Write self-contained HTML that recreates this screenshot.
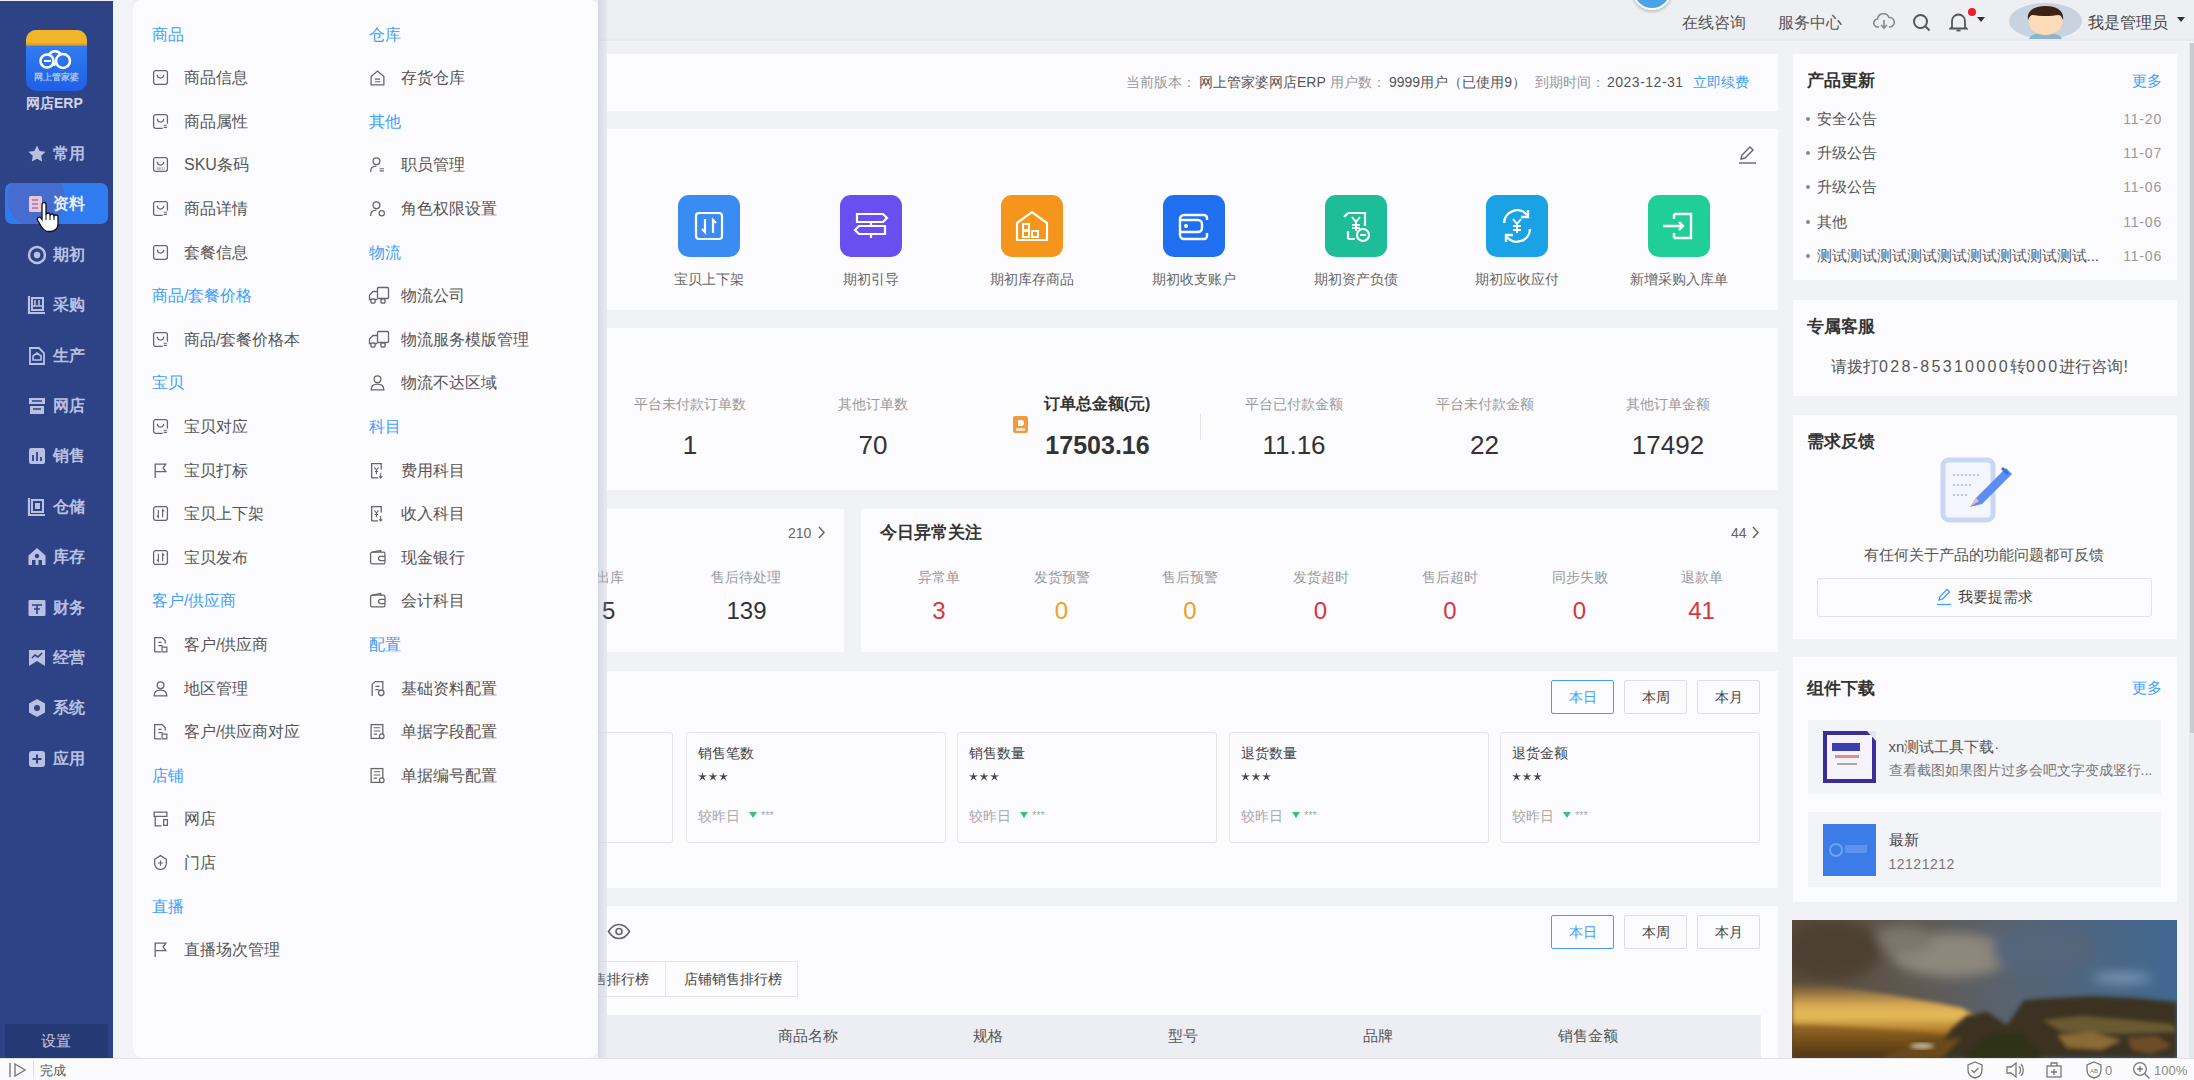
<!DOCTYPE html>
<html><head><meta charset="utf-8">
<style>
*{box-sizing:border-box;margin:0;padding:0}
html,body{width:2194px;height:1080px;overflow:hidden;background:#f1f2f6;font-family:"Liberation Sans",sans-serif;color:#333}
.a{position:absolute}
.t{position:absolute;white-space:nowrap;line-height:20px}
.c{transform:translateX(-50%)}
#hdr{left:0;top:0;width:2194px;height:41px;background:#eeeff3}
#side{left:0;top:1px;width:113px;height:1057px;background:#2e4386}
.card{position:absolute;background:#fcfcfe}
#status{left:0;top:1058px;width:2194px;height:22px;background:#fbfbfd;border-top:1px solid #e2e3e8}
#fly{left:133px;top:0;width:465px;height:1058px;background:#fcfcfe;border-radius:8px 8px 10px 10px}
#flyshadow{left:113px;top:0;width:20px;height:1058px;background:#f3f4f7}
#flyedge{left:598px;top:0;width:9px;height:1058px;background:linear-gradient(90deg,rgba(170,172,190,.35),rgba(190,192,210,.15))}
</style></head><body>
<div id="hdr" class="a"></div><div class="a" style="left:0;top:37px;width:2194px;height:4px;background:linear-gradient(#eeeff3,#e6e7ed)"></div>

<!-- main cards -->
<div class="card" style="left:607px;top:54px;width:1171px;height:57px"></div>
<div class="card" style="left:607px;top:129px;width:1171px;height:181px"></div>
<div class="card" style="left:607px;top:328px;width:1171px;height:162px"></div>
<div class="card" style="left:607px;top:509px;width:237px;height:143px"></div>
<div class="card" style="left:861px;top:509px;width:917px;height:143px"></div>
<div class="card" style="left:607px;top:671px;width:1171px;height:217px"></div>
<div class="card" style="left:607px;top:906px;width:1171px;height:152px"></div>

<div class="t" style="left:1681.5px;top:11.5px;line-height:21px;font-size:16px;color:#555">在线咨询</div>
<div class="t" style="left:1778px;top:11.5px;line-height:21px;font-size:16px;color:#555">服务中心</div>
<div class="a" style="left:1632px;top:-30px;width:40px;height:40px;border-radius:50%;background:#4aa3e6;border:2px solid #fff;box-shadow:0 2px 3px rgba(0,0,0,.2)"></div>
<svg class="a" style="left:1873px;top:12px" width="22" height="19" viewBox="0 0 22 19"><path d="M6 15H5a4 4 0 0 1-.5-8A6 6 0 0 1 16 5.5a4.5 4.5 0 0 1 1 9.5h-1" fill="none" stroke="#888" stroke-width="1.6"/><path d="M11 8v8M8 13l3 3 3-3" fill="none" stroke="#888" stroke-width="1.6"/></svg>
<svg class="a" style="left:1912px;top:13px" width="19" height="19" viewBox="0 0 19 19"><circle cx="8.5" cy="8.5" r="6.5" fill="none" stroke="#555" stroke-width="2"/><path d="M13.5 13.5l4 4" stroke="#555" stroke-width="2"/></svg>
<svg class="a" style="left:1949px;top:12px" width="19" height="20" viewBox="0 0 19 20"><path d="M3 15V9a6.5 6.5 0 0 1 13 0v6l1.5 1.5h-16z" fill="none" stroke="#555" stroke-width="1.8"/><path d="M7.5 18.5h4" stroke="#555" stroke-width="1.8"/></svg>
<div class="a" style="left:1968px;top:8px;width:8px;height:8px;border-radius:50%;background:#e8202a"></div>
<svg class="a" style="left:1977px;top:17px" width="8" height="6"><path d="M0 0h8L4 5z" fill="#333"/></svg>
<svg class="a" style="left:2009px;top:3px" width="73" height="36" viewBox="0 0 73 36"><ellipse cx="36.5" cy="18" rx="36.5" ry="18" fill="#c9d3df"/><path d="M20 36c2-5 8-6 16.5-6s14.5 1 16.5 6z" fill="#8db4cc"/><ellipse cx="36.5" cy="18" rx="17" ry="14" fill="#fcdcb8"/><path d="M19 17c-1.5-9 6-14 17.5-14S55.5 8 54 17c-1-3-2.5-4.5-4-5-4 .5-9 1-13.5 1s-9.5-.5-13.5-1c-1.5.5-3 2-4 5z" fill="#3b2216"/></svg>
<div class="t" style="left:2088px;top:11.5px;line-height:21px;font-size:16px;color:#444">我是管理员</div>
<svg class="a" style="left:2177px;top:17px" width="8" height="6"><path d="M0 0h8L4 5z" fill="#333"/></svg>
<div class="t" style="left:1126px;top:73.0px;line-height:18px;font-size:14px;color:#999">当前版本：</div>
<div class="t" style="left:1199px;top:73.0px;line-height:18px;font-size:14px;color:#555">网上管家婆网店ERP</div>
<div class="t" style="left:1330px;top:73.0px;line-height:18px;font-size:14px;color:#999">用户数：</div>
<div class="t" style="left:1389px;top:73.0px;line-height:18px;font-size:14px;color:#555">9999用户（已使用9）</div>
<div class="t" style="left:1535px;top:73.0px;line-height:18px;font-size:14px;color:#999">到期时间：</div>
<div class="t" style="left:1607px;top:73.0px;line-height:18px;font-size:14px;color:#555;letter-spacing:0.5px">2023-12-31</div>
<div class="t" style="left:1693px;top:73.0px;line-height:18px;font-size:14px;color:#409eff">立即续费</div>
<svg class="a" style="left:1737px;top:146px" width="20" height="18" viewBox="0 0 20 18"><path d="M4 13l1-4 8-8 3 3-8 8z" fill="none" stroke="#666" stroke-width="1.4"/><path d="M2 17h17" stroke="#666" stroke-width="1.4"/></svg>
<svg class="a" style="left:678.0px;top:195px" width="62" height="62" viewBox="0 0 62 62"><rect width="62" height="62" rx="11" fill="#3a8cf3"/><rect x="18" y="18" width="26" height="26" rx="3" fill="none" stroke="#fff" stroke-width="2.2"/><path d="M27 24v13l-3-3M35 38V25l3 3" fill="none" stroke="#fff" stroke-width="2.2"/></svg>
<div class="t" style="left:709.0px;transform:translateX(-50%);top:270.0px;line-height:18px;font-size:14px;color:#666">宝贝上下架</div>
<svg class="a" style="left:839.6px;top:195px" width="62" height="62" viewBox="0 0 62 62"><rect width="62" height="62" rx="11" fill="#6a4ff0"/><path d="M17 19h26l4 4-4 4H17zM45 31H19l-4 4 4 4h26zM31 27v4M31 39v4" fill="none" stroke="#fff" stroke-width="2.2"/></svg>
<div class="t" style="left:870.6px;transform:translateX(-50%);top:270.0px;line-height:18px;font-size:14px;color:#666">期初引导</div>
<svg class="a" style="left:1001.3px;top:195px" width="62" height="62" viewBox="0 0 62 62"><rect width="62" height="62" rx="11" fill="#f5951c"/><path d="M16 28L31 17l15 11v17H16z" fill="none" stroke="#fff" stroke-width="2.2"/><rect x="22" y="29" width="6" height="6" fill="none" stroke="#fff" stroke-width="2"/><rect x="22" y="36" width="6" height="6" fill="none" stroke="#fff" stroke-width="2"/><rect x="31" y="36" width="6" height="6" fill="none" stroke="#fff" stroke-width="2"/></svg>
<div class="t" style="left:1032.3px;transform:translateX(-50%);top:270.0px;line-height:18px;font-size:14px;color:#666">期初库存商品</div>
<svg class="a" style="left:1163.0px;top:195px" width="62" height="62" viewBox="0 0 62 62"><rect width="62" height="62" rx="11" fill="#1f6ff0"/><path d="M44 25v-2a3 3 0 0 0-3-3H21a4 4 0 0 0-4 4v16a4 4 0 0 0 4 4h20a3 3 0 0 0 3-3v-3" fill="none" stroke="#fff" stroke-width="2.4"/><path d="M17 25h18a4 4 0 0 1 4 4v4a4 4 0 0 1-4 4H17" fill="none" stroke="#fff" stroke-width="2.4"/><circle cx="23" cy="31" r="2" fill="#fff"/></svg>
<div class="t" style="left:1194.0px;transform:translateX(-50%);top:270.0px;line-height:18px;font-size:14px;color:#666">期初收支账户</div>
<svg class="a" style="left:1324.6px;top:195px" width="62" height="62" viewBox="0 0 62 62"><rect width="62" height="62" rx="11" fill="#1dbd9a"/><path d="M23 18h17v13M23 18l-4 4M23 44v-8M23 44h7" fill="none" stroke="#fff" stroke-width="2.2"/><path d="M27 22l4 5 4-5M31 27v9M27 30h8M27 33h8" fill="none" stroke="#fff" stroke-width="2"/><circle cx="38" cy="40" r="6" fill="none" stroke="#fff" stroke-width="2.2"/><path d="M35 40h6" stroke="#fff" stroke-width="2"/></svg>
<div class="t" style="left:1355.6px;transform:translateX(-50%);top:270.0px;line-height:18px;font-size:14px;color:#666">期初资产负债</div>
<svg class="a" style="left:1486.2px;top:195px" width="62" height="62" viewBox="0 0 62 62"><rect width="62" height="62" rx="11" fill="#1aa2e6"/><path d="M18 28a13 13 0 0 1 23-8M44 34a13 13 0 0 1-23 8" fill="none" stroke="#fff" stroke-width="2.4"/><path d="M42 15v7h-7M20 47v-7h7" fill="none" stroke="#fff" stroke-width="2.4"/><path d="M27 24l4 5 4-5M31 29v9M27 31h8M27 35h8" fill="none" stroke="#fff" stroke-width="2"/></svg>
<div class="t" style="left:1517.2px;transform:translateX(-50%);top:270.0px;line-height:18px;font-size:14px;color:#666">期初应收应付</div>
<svg class="a" style="left:1647.9px;top:195px" width="62" height="62" viewBox="0 0 62 62"><rect width="62" height="62" rx="11" fill="#20cf97"/><path d="M26 19h17v24H26M26 19v5M26 43v-5" fill="none" stroke="#fff" stroke-width="2.4"/><path d="M15 31h20M31 27l4 4-4 4" fill="none" stroke="#fff" stroke-width="2.4"/></svg>
<div class="t" style="left:1678.9px;transform:translateX(-50%);top:270.0px;line-height:18px;font-size:14px;color:#666">新增采购入库单</div>
<div class="t" style="left:690px;transform:translateX(-50%);top:395.0px;line-height:18px;font-size:14px;color:#999">平台未付款订单数</div>
<div class="t" style="left:690px;transform:translateX(-50%);top:427.5px;line-height:34px;font-size:26px;color:#333">1</div>
<div class="t" style="left:873px;transform:translateX(-50%);top:395.0px;line-height:18px;font-size:14px;color:#999">其他订单数</div>
<div class="t" style="left:873px;transform:translateX(-50%);top:427.5px;line-height:34px;font-size:26px;color:#333">70</div>
<div class="t" style="left:1294px;transform:translateX(-50%);top:395.0px;line-height:18px;font-size:14px;color:#999">平台已付款金额</div>
<div class="t" style="left:1294px;transform:translateX(-50%);top:427.5px;line-height:34px;font-size:26px;color:#333">11.16</div>
<div class="t" style="left:1484.5px;transform:translateX(-50%);top:395.0px;line-height:18px;font-size:14px;color:#999">平台未付款金额</div>
<div class="t" style="left:1484.5px;transform:translateX(-50%);top:427.5px;line-height:34px;font-size:26px;color:#333">22</div>
<div class="t" style="left:1668px;transform:translateX(-50%);top:395.0px;line-height:18px;font-size:14px;color:#999">其他订单金额</div>
<div class="t" style="left:1668px;transform:translateX(-50%);top:427.5px;line-height:34px;font-size:26px;color:#333">17492</div>
<div class="t" style="left:1097px;transform:translateX(-50%);top:394.0px;line-height:20px;font-size:16px;color:#333;font-weight:bold">订单总金额(元)</div>
<div class="t" style="left:1097.5px;transform:translateX(-50%);top:429.0px;line-height:32px;font-size:25px;color:#333;font-weight:bold">17503.16</div>
<svg class="a" style="left:1013px;top:416px" width="15" height="17" viewBox="0 0 15 17"><rect x="0" y="0" width="15" height="17" rx="2" fill="#f59a3a"/><path d="M5 4h3a3 3 0 0 1 0 6H5z" fill="#fff"/><rect x="3" y="12" width="9" height="3" fill="#fde0c0"/></svg>
<div class="a" style="left:1200px;top:414px;width:1px;height:26px;background:#e6e6ea"></div>
<div class="t" style="left:788px;top:523.5px;line-height:18px;font-size:14px;color:#666">210</div>
<svg class="a" style="left:817px;top:526px" width="9" height="13" viewBox="0 0 9 13"><path d="M2 1l5 5.5L2 12" fill="none" stroke="#666" stroke-width="1.5"/></svg>
<div class="t" style="left:596px;top:567.5px;line-height:18px;font-size:14px;color:#999">出库</div>
<div class="t" style="left:746px;transform:translateX(-50%);top:567.5px;line-height:18px;font-size:14px;color:#999">售后待处理</div>
<div class="t" style="left:602px;top:595.0px;line-height:31px;font-size:24px;color:#333">5</div>
<div class="t" style="left:746.5px;transform:translateX(-50%);top:595.0px;line-height:31px;font-size:24px;color:#333">139</div>
<div class="t" style="left:880px;top:522.0px;line-height:22px;font-size:17px;color:#333;font-weight:bold">今日异常关注</div>
<div class="t" style="left:1731px;top:523.5px;line-height:18px;font-size:14px;color:#666">44</div>
<svg class="a" style="left:1751px;top:526px" width="9" height="13" viewBox="0 0 9 13"><path d="M2 1l5 5.5L2 12" fill="none" stroke="#666" stroke-width="1.5"/></svg>
<div class="t" style="left:939px;transform:translateX(-50%);top:567.5px;line-height:18px;font-size:14px;color:#999">异常单</div>
<div class="t" style="left:939px;transform:translateX(-50%);top:595.0px;line-height:31px;font-size:24px;color:#d8363d">3</div>
<div class="t" style="left:1061.5px;transform:translateX(-50%);top:567.5px;line-height:18px;font-size:14px;color:#999">发货预警</div>
<div class="t" style="left:1061.5px;transform:translateX(-50%);top:595.0px;line-height:31px;font-size:24px;color:#f0a020">0</div>
<div class="t" style="left:1190px;transform:translateX(-50%);top:567.5px;line-height:18px;font-size:14px;color:#999">售后预警</div>
<div class="t" style="left:1190px;transform:translateX(-50%);top:595.0px;line-height:31px;font-size:24px;color:#f0a020">0</div>
<div class="t" style="left:1320.5px;transform:translateX(-50%);top:567.5px;line-height:18px;font-size:14px;color:#999">发货超时</div>
<div class="t" style="left:1320.5px;transform:translateX(-50%);top:595.0px;line-height:31px;font-size:24px;color:#d8363d">0</div>
<div class="t" style="left:1450px;transform:translateX(-50%);top:567.5px;line-height:18px;font-size:14px;color:#999">售后超时</div>
<div class="t" style="left:1450px;transform:translateX(-50%);top:595.0px;line-height:31px;font-size:24px;color:#d8363d">0</div>
<div class="t" style="left:1579.5px;transform:translateX(-50%);top:567.5px;line-height:18px;font-size:14px;color:#999">同步失败</div>
<div class="t" style="left:1579.5px;transform:translateX(-50%);top:595.0px;line-height:31px;font-size:24px;color:#d8363d">0</div>
<div class="t" style="left:1701.5px;transform:translateX(-50%);top:567.5px;line-height:18px;font-size:14px;color:#999">退款单</div>
<div class="t" style="left:1701.5px;transform:translateX(-50%);top:595.0px;line-height:31px;font-size:24px;color:#d8363d">41</div>
<div class="a" style="left:1551px;top:680px;width:63px;height:34px;border:1px solid #409eff;border-radius:2px"></div><div class="t" style="left:1582.5px;transform:translateX(-50%);top:688.0px;line-height:18px;font-size:14px;color:#409eff">本日</div>
<div class="a" style="left:1624px;top:680px;width:63px;height:34px;border:1px solid #dcdfe6;border-radius:2px"></div><div class="t" style="left:1655.5px;transform:translateX(-50%);top:688.0px;line-height:18px;font-size:14px;color:#444">本周</div>
<div class="a" style="left:1697px;top:680px;width:63px;height:34px;border:1px solid #dcdfe6;border-radius:2px"></div><div class="t" style="left:1728.5px;transform:translateX(-50%);top:688.0px;line-height:18px;font-size:14px;color:#444">本月</div>
<div class="a" style="left:414px;top:732px;width:259px;height:111px;border:1px solid #e4e6ec;border-radius:3px"></div>
<div class="t" style="left:426px;top:743.5px;line-height:18px;font-size:14px;color:#444">销售金额</div>
<svg class="a" style="left:426px;top:772px" width="31" height="9" viewBox="0 0 31 9"><path d="M4.5 0l.8 3.6L9 3.3 5.8 5.3l1.9 3.5-3.2-2.4-3.2 2.4 1.9-3.5L0 3.3l3.7.3z" fill="#444"/><path d="M4.5 0l.8 3.6L9 3.3 5.8 5.3l1.9 3.5-3.2-2.4-3.2 2.4 1.9-3.5L0 3.3l3.7.3z" transform="translate(10.5 0)" fill="#444"/><path d="M4.5 0l.8 3.6L9 3.3 5.8 5.3l1.9 3.5-3.2-2.4-3.2 2.4 1.9-3.5L0 3.3l3.7.3z" transform="translate(21 0)" fill="#444"/></svg>
<div class="t" style="left:426px;top:806.5px;line-height:18px;font-size:14px;color:#aaa">较昨日</div>
<svg class="a" style="left:477px;top:812px" width="8" height="7"><path d="M0 0h8L4 6z" fill="#3bbf7a"/></svg><div class="t" style="left:489px;top:808.0px;line-height:14px;font-size:11px;color:#aaa">***</div>
<div class="a" style="left:686px;top:732px;width:260px;height:111px;border:1px solid #e4e6ec;border-radius:3px"></div>
<div class="t" style="left:698px;top:743.5px;line-height:18px;font-size:14px;color:#444">销售笔数</div>
<svg class="a" style="left:698px;top:772px" width="31" height="9" viewBox="0 0 31 9"><path d="M4.5 0l.8 3.6L9 3.3 5.8 5.3l1.9 3.5-3.2-2.4-3.2 2.4 1.9-3.5L0 3.3l3.7.3z" fill="#444"/><path d="M4.5 0l.8 3.6L9 3.3 5.8 5.3l1.9 3.5-3.2-2.4-3.2 2.4 1.9-3.5L0 3.3l3.7.3z" transform="translate(10.5 0)" fill="#444"/><path d="M4.5 0l.8 3.6L9 3.3 5.8 5.3l1.9 3.5-3.2-2.4-3.2 2.4 1.9-3.5L0 3.3l3.7.3z" transform="translate(21 0)" fill="#444"/></svg>
<div class="t" style="left:698px;top:806.5px;line-height:18px;font-size:14px;color:#aaa">较昨日</div>
<svg class="a" style="left:749px;top:812px" width="8" height="7"><path d="M0 0h8L4 6z" fill="#3bbf7a"/></svg><div class="t" style="left:761px;top:808.0px;line-height:14px;font-size:11px;color:#aaa">***</div>
<div class="a" style="left:957px;top:732px;width:260px;height:111px;border:1px solid #e4e6ec;border-radius:3px"></div>
<div class="t" style="left:969px;top:743.5px;line-height:18px;font-size:14px;color:#444">销售数量</div>
<svg class="a" style="left:969px;top:772px" width="31" height="9" viewBox="0 0 31 9"><path d="M4.5 0l.8 3.6L9 3.3 5.8 5.3l1.9 3.5-3.2-2.4-3.2 2.4 1.9-3.5L0 3.3l3.7.3z" fill="#444"/><path d="M4.5 0l.8 3.6L9 3.3 5.8 5.3l1.9 3.5-3.2-2.4-3.2 2.4 1.9-3.5L0 3.3l3.7.3z" transform="translate(10.5 0)" fill="#444"/><path d="M4.5 0l.8 3.6L9 3.3 5.8 5.3l1.9 3.5-3.2-2.4-3.2 2.4 1.9-3.5L0 3.3l3.7.3z" transform="translate(21 0)" fill="#444"/></svg>
<div class="t" style="left:969px;top:806.5px;line-height:18px;font-size:14px;color:#aaa">较昨日</div>
<svg class="a" style="left:1020px;top:812px" width="8" height="7"><path d="M0 0h8L4 6z" fill="#3bbf7a"/></svg><div class="t" style="left:1032px;top:808.0px;line-height:14px;font-size:11px;color:#aaa">***</div>
<div class="a" style="left:1229px;top:732px;width:260px;height:111px;border:1px solid #e4e6ec;border-radius:3px"></div>
<div class="t" style="left:1241px;top:743.5px;line-height:18px;font-size:14px;color:#444">退货数量</div>
<svg class="a" style="left:1241px;top:772px" width="31" height="9" viewBox="0 0 31 9"><path d="M4.5 0l.8 3.6L9 3.3 5.8 5.3l1.9 3.5-3.2-2.4-3.2 2.4 1.9-3.5L0 3.3l3.7.3z" fill="#444"/><path d="M4.5 0l.8 3.6L9 3.3 5.8 5.3l1.9 3.5-3.2-2.4-3.2 2.4 1.9-3.5L0 3.3l3.7.3z" transform="translate(10.5 0)" fill="#444"/><path d="M4.5 0l.8 3.6L9 3.3 5.8 5.3l1.9 3.5-3.2-2.4-3.2 2.4 1.9-3.5L0 3.3l3.7.3z" transform="translate(21 0)" fill="#444"/></svg>
<div class="t" style="left:1241px;top:806.5px;line-height:18px;font-size:14px;color:#aaa">较昨日</div>
<svg class="a" style="left:1292px;top:812px" width="8" height="7"><path d="M0 0h8L4 6z" fill="#3bbf7a"/></svg><div class="t" style="left:1304px;top:808.0px;line-height:14px;font-size:11px;color:#aaa">***</div>
<div class="a" style="left:1500px;top:732px;width:260px;height:111px;border:1px solid #e4e6ec;border-radius:3px"></div>
<div class="t" style="left:1512px;top:743.5px;line-height:18px;font-size:14px;color:#444">退货金额</div>
<svg class="a" style="left:1512px;top:772px" width="31" height="9" viewBox="0 0 31 9"><path d="M4.5 0l.8 3.6L9 3.3 5.8 5.3l1.9 3.5-3.2-2.4-3.2 2.4 1.9-3.5L0 3.3l3.7.3z" fill="#444"/><path d="M4.5 0l.8 3.6L9 3.3 5.8 5.3l1.9 3.5-3.2-2.4-3.2 2.4 1.9-3.5L0 3.3l3.7.3z" transform="translate(10.5 0)" fill="#444"/><path d="M4.5 0l.8 3.6L9 3.3 5.8 5.3l1.9 3.5-3.2-2.4-3.2 2.4 1.9-3.5L0 3.3l3.7.3z" transform="translate(21 0)" fill="#444"/></svg>
<div class="t" style="left:1512px;top:806.5px;line-height:18px;font-size:14px;color:#aaa">较昨日</div>
<svg class="a" style="left:1563px;top:812px" width="8" height="7"><path d="M0 0h8L4 6z" fill="#3bbf7a"/></svg><div class="t" style="left:1575px;top:808.0px;line-height:14px;font-size:11px;color:#aaa">***</div>
<div class="a" style="left:1551px;top:915px;width:63px;height:34px;border:1px solid #409eff;border-radius:2px"></div><div class="t" style="left:1582.5px;transform:translateX(-50%);top:923.0px;line-height:18px;font-size:14px;color:#409eff">本日</div>
<div class="a" style="left:1624px;top:915px;width:63px;height:34px;border:1px solid #dcdfe6;border-radius:2px"></div><div class="t" style="left:1655.5px;transform:translateX(-50%);top:923.0px;line-height:18px;font-size:14px;color:#444">本周</div>
<div class="a" style="left:1697px;top:915px;width:63px;height:34px;border:1px solid #dcdfe6;border-radius:2px"></div><div class="t" style="left:1728.5px;transform:translateX(-50%);top:923.0px;line-height:18px;font-size:14px;color:#444">本月</div>
<svg class="a" style="left:607px;top:923px" width="24" height="17" viewBox="0 0 24 17"><path d="M1.5 8.5C4.5 3.5 8 1.5 12 1.5s7.5 2 10.5 7c-3 5-6.5 7-10.5 7s-7.5-2-10.5-7z" fill="none" stroke="#666" stroke-width="1.6"/><circle cx="12" cy="8.5" r="3" fill="none" stroke="#666" stroke-width="1.6"/></svg>
<div class="a" style="left:540px;top:961px;width:126px;height:36px;border:1px solid #e4e6ec"></div><div class="a" style="left:666px;top:961px;width:132px;height:36px;border:1px solid #e4e6ec;border-left:none"></div>
<div class="t" style="right:1545px;top:969.5px;line-height:18px;font-size:14px;color:#444">售排行榜</div>
<div class="t" style="left:683.5px;top:969.5px;line-height:18px;font-size:14px;color:#444">店铺销售排行榜</div>
<div class="a" style="left:607px;top:1015px;width:1154px;height:43px;background:#eceef3"></div>
<div class="t" style="left:808px;transform:translateX(-50%);top:1027.0px;line-height:18px;font-size:15px;color:#555">商品名称</div>
<div class="t" style="left:988px;transform:translateX(-50%);top:1027.0px;line-height:18px;font-size:15px;color:#555">规格</div>
<div class="t" style="left:1183px;transform:translateX(-50%);top:1027.0px;line-height:18px;font-size:15px;color:#555">型号</div>
<div class="t" style="left:1378px;transform:translateX(-50%);top:1027.0px;line-height:18px;font-size:15px;color:#555">品牌</div>
<div class="t" style="left:1588px;transform:translateX(-50%);top:1027.0px;line-height:18px;font-size:15px;color:#555">销售金额</div>

<!-- right column -->
<div class="card" style="left:1793px;top:54px;width:384px;height:226px"></div>
<div class="card" style="left:1793px;top:300px;width:384px;height:96px"></div>
<div class="card" style="left:1793px;top:415px;width:384px;height:224px"></div>
<div class="card" style="left:1793px;top:657px;width:384px;height:245px"></div>

<div class="t" style="left:1807px;top:70.0px;line-height:22px;font-size:17px;color:#333;font-weight:bold">产品更新</div>
<div class="t" style="right:32.5px;top:70.5px;line-height:20px;font-size:15px;color:#409eff">更多</div>
<div class="a" style="left:1806px;top:116.6px;width:4px;height:4px;border-radius:50%;background:#888"></div><div class="t" style="left:1816.5px;top:108.6px;line-height:20px;font-size:15px;color:#555">安全公告</div>
<div class="t" style="right:32px;top:109.6px;line-height:18px;font-size:14px;color:#999;letter-spacing:0.8px">11-20</div>
<div class="a" style="left:1806px;top:151.0px;width:4px;height:4px;border-radius:50%;background:#888"></div><div class="t" style="left:1816.5px;top:143.0px;line-height:20px;font-size:15px;color:#555">升级公告</div>
<div class="t" style="right:32px;top:144.0px;line-height:18px;font-size:14px;color:#999;letter-spacing:0.8px">11-07</div>
<div class="a" style="left:1806px;top:185.4px;width:4px;height:4px;border-radius:50%;background:#888"></div><div class="t" style="left:1816.5px;top:177.4px;line-height:20px;font-size:15px;color:#555">升级公告</div>
<div class="t" style="right:32px;top:178.4px;line-height:18px;font-size:14px;color:#999;letter-spacing:0.8px">11-06</div>
<div class="a" style="left:1806px;top:219.8px;width:4px;height:4px;border-radius:50%;background:#888"></div><div class="t" style="left:1816.5px;top:211.8px;line-height:20px;font-size:15px;color:#555">其他</div>
<div class="t" style="right:32px;top:212.8px;line-height:18px;font-size:14px;color:#999;letter-spacing:0.8px">11-06</div>
<div class="a" style="left:1806px;top:254.2px;width:4px;height:4px;border-radius:50%;background:#888"></div><div class="t" style="left:1816.5px;top:246.2px;line-height:20px;font-size:15px;color:#555">测试测试测试测试测试测试测试测试测试...</div>
<div class="t" style="right:32px;top:247.2px;line-height:18px;font-size:14px;color:#999;letter-spacing:0.8px">11-06</div>
<div class="t" style="left:1807px;top:315.5px;line-height:22px;font-size:17px;color:#333;font-weight:bold">专属客服</div>
<div class="t" style="left:1979.5px;transform:translateX(-50%);top:355.5px;line-height:21px;font-size:16px;color:#555">请拨打<span style="letter-spacing:2.3px">028-85310000</span>转<span style="letter-spacing:2.3px">000</span>进行咨询<span style="letter-spacing:0">!</span></div>
<div class="t" style="left:1807px;top:430.5px;line-height:22px;font-size:17px;color:#333;font-weight:bold">需求反馈</div>
<svg class="a" style="left:1940px;top:457px" width="73" height="66" viewBox="0 0 73 66">
<rect x="3" y="3" width="50" height="60" rx="6" fill="#f4f6fd" stroke="#c9d6f6" stroke-width="5"/>
<path d="M13 18h26M13 28h18M13 38h16" stroke="#b8c4e8" stroke-width="2" stroke-dasharray="2 2"/>
<path d="M30 50l6-9 30-30 6 6-30 30z" fill="#5b8ef0"/><path d="M30 50l6-9 3 3z" fill="#f0b8a8"/><path d="M62 11l6 6" stroke="#3a6de0" stroke-width="3"/>
</svg>
<div class="t" style="left:1984px;transform:translateX(-50%);top:543.5px;line-height:21px;font-size:15px;color:#555">有任何关于产品的功能问题都可反馈</div>
<div class="a" style="left:1817px;top:578px;width:335px;height:39px;border:1px solid #e2e4ea;border-radius:3px"></div>
<svg class="a" style="left:1936px;top:588px" width="16" height="18" viewBox="0 0 16 18"><path d="M3 12l1-3.5 7-7 2.5 2.5-7 7z" fill="none" stroke="#409eff" stroke-width="1.3"/><path d="M1 16.5h14" stroke="#409eff" stroke-width="1.3"/></svg>
<div class="t" style="left:1957.5px;top:587.0px;line-height:20px;font-size:15px;color:#444">我要提需求</div>
<div class="t" style="left:1807px;top:678.0px;line-height:22px;font-size:17px;color:#333;font-weight:bold">组件下载</div>
<div class="t" style="right:32.5px;top:678.0px;line-height:20px;font-size:15px;color:#409eff">更多</div>
<div class="a" style="left:1808px;top:720px;width:353px;height:74px;background:#f3f4f7"></div>
<div class="a" style="left:1808px;top:812px;width:353px;height:75px;background:#f3f4f7"></div>
<svg class="a" style="left:1823px;top:731px" width="53" height="52" viewBox="0 0 53 52"><rect width="53" height="52" fill="#3a2e9a"/><rect x="4" y="4" width="45" height="44" fill="#f6f4fa"/><rect x="9" y="12" width="28" height="8" fill="#3a40b0"/><rect x="12" y="24" width="24" height="3" fill="#e88a8a"/><rect x="14" y="32" width="20" height="2" fill="#aaa"/><path d="M44 0h9v10z" fill="#e8e4f6"/></svg>
<div class="a" style="left:1823px;top:824px;width:53px;height:52px;background:#3b7ce6"></div>
<svg class="a" style="left:1827px;top:838px" width="44" height="22" viewBox="0 0 44 22"><circle cx="9" cy="12" r="6" fill="none" stroke="#6fa2f0" stroke-width="2"/><rect x="18" y="7" width="22" height="8" fill="#5d93ee"/></svg>
<div class="t" style="left:1888.5px;top:737.0px;line-height:20px;font-size:15px;color:#555">xn测试工具下载·</div>
<div class="t" style="left:1888.5px;top:761.0px;line-height:18px;font-size:14px;color:#777">查看截图如果图片过多会吧文字变成竖行...</div>
<div class="t" style="left:1888.5px;top:830.0px;line-height:20px;font-size:15px;color:#444">最新</div>
<div class="t" style="left:1888.5px;top:854.5px;line-height:18px;font-size:14px;color:#777;letter-spacing:0.5px">12121212</div>
<svg class="a" style="left:1792px;top:920px" width="385" height="138" viewBox="0 0 385 138" preserveAspectRatio="none">
<defs>
<linearGradient id="sky" x1="0" y1="0" x2="1" y2="0"><stop offset="0" stop-color="#5a4a38"/><stop offset=".35" stop-color="#5f5a54"/><stop offset=".6" stop-color="#566474"/><stop offset="1" stop-color="#406892"/></linearGradient>
<linearGradient id="glow" x1="0" y1="0" x2="0" y2="1"><stop offset="0" stop-color="#c89a48" stop-opacity="0"/><stop offset=".3" stop-color="#d8a850"/><stop offset=".45" stop-color="#e6bc5c"/><stop offset=".65" stop-color="#b07a28"/><stop offset="1" stop-color="#5a3c16"/></linearGradient>
<linearGradient id="sea" x1="0" y1="0" x2="0" y2="1"><stop offset="0" stop-color="#9a6a24"/><stop offset="1" stop-color="#4e3414"/></linearGradient>
<filter id="bl" x="-20%" y="-20%" width="140%" height="140%"><feGaussianBlur stdDeviation="6"/></filter>
<filter id="bl2"><feGaussianBlur stdDeviation="2"/></filter>
</defs>
<rect width="385" height="138" fill="url(#sky)"/>
<g filter="url(#bl)">
<ellipse cx="160" cy="35" rx="60" ry="22" fill="#8d877c"/>
<ellipse cx="110" cy="20" rx="30" ry="14" fill="#7d766c"/>
<ellipse cx="40" cy="30" rx="50" ry="30" fill="#4e4032"/>
<ellipse cx="330" cy="58" rx="30" ry="4" fill="#8aa6c0"/>
<ellipse cx="250" cy="30" rx="50" ry="25" fill="#55657a"/>
</g>
<g filter="url(#bl2)">
<path d="M0 62C50 66 110 76 170 88L190 100L160 138H0z" fill="url(#glow)"/>
<path d="M0 104C60 106 120 110 160 114L140 138H0z" fill="url(#sea)"/>
</g>
<path d="M140 138L160 108L175 95L195 92L215 105L232 80L260 78L300 76L345 78L385 82V138z" fill="#3a3322" filter="url(#bl2)"/>
<g filter="url(#bl2)">
<path d="M250 100L290 96L340 100L380 104L385 112L330 114L270 112z" fill="#6a5a30"/>
<path d="M265 115L300 112L330 120L310 130L275 128z" fill="#8a6a36"/>
<path d="M335 118L365 116L380 126L360 134L340 130z" fill="#6e4e26"/>
<path d="M170 138L200 115L230 112L250 138z" fill="#2e3018"/>
<path d="M90 138L130 120L170 118L150 138z" fill="#6a4a1e"/>
</g>
<ellipse cx="130" cy="126" rx="12" ry="3" fill="#c8b89a" filter="url(#bl2)"/>
</svg>

<div id="side" class="a">
<svg class="a" style="left:26px;top:29px" width="61" height="61" viewBox="0 0 61 61">
<defs><clipPath id="lg"><rect x="0" y="0" width="61" height="61" rx="10"/></clipPath><linearGradient id="lgb" x1="0" y1="0" x2="0" y2="1"><stop offset="0" stop-color="#3a86f6"/><stop offset="1" stop-color="#1d5fe6"/></linearGradient></defs>
<g clip-path="url(#lg)"><rect width="61" height="61" fill="url(#lgb)"/><rect width="61" height="15" fill="#f3b528"/><rect y="13" width="61" height="3" fill="#e09a20" opacity=".6"/>
<g fill="none" stroke="#fff" stroke-width="2.6"><circle cx="21" cy="31" r="6.5"/><circle cx="37" cy="31" r="7"/><path d="M23 24.8a7 7 0 0 1 12-.3"/></g>
<path d="M18 31h7M28 36l2-4" stroke="#fff" stroke-width="2"/>
<text x="30.5" y="50" font-size="8.5" text-anchor="middle" fill="#a9c6fa" font-weight="bold">网上管家婆</text></g></svg>
<div class="t" style="left:26px;top:92px;font-size:14px;color:#d0d4e8;font-weight:bold">网店ERP</div>
<div class="a" style="left:5px;top:182px;width:103px;height:41px;border-radius:7px;background:#2f7bef;overflow:hidden"><div class="a" style="left:2px;top:-14px;width:58px;height:58px;border-radius:50%;background:rgba(100,90,170,.45)"></div></div>
<div class="t" style="left:53px;top:143.0px;font-size:16px;font-weight:bold;color:#b9c1e2">常用</div>
<div class="t" style="left:53px;top:193.4px;font-size:16px;font-weight:bold;color:#e8ecfa">资料</div>
<div class="t" style="left:53px;top:243.8px;font-size:16px;font-weight:bold;color:#b9c1e2">期初</div>
<div class="t" style="left:53px;top:294.2px;font-size:16px;font-weight:bold;color:#b9c1e2">采购</div>
<div class="t" style="left:53px;top:344.6px;font-size:16px;font-weight:bold;color:#b9c1e2">生产</div>
<div class="t" style="left:53px;top:395.0px;font-size:16px;font-weight:bold;color:#b9c1e2">网店</div>
<div class="t" style="left:53px;top:445.4px;font-size:16px;font-weight:bold;color:#b9c1e2">销售</div>
<div class="t" style="left:53px;top:495.8px;font-size:16px;font-weight:bold;color:#b9c1e2">仓储</div>
<div class="t" style="left:53px;top:546.2px;font-size:16px;font-weight:bold;color:#b9c1e2">库存</div>
<div class="t" style="left:53px;top:596.6px;font-size:16px;font-weight:bold;color:#b9c1e2">财务</div>
<div class="t" style="left:53px;top:647.0px;font-size:16px;font-weight:bold;color:#b9c1e2">经营</div>
<div class="t" style="left:53px;top:697.4px;font-size:16px;font-weight:bold;color:#b9c1e2">系统</div>
<div class="t" style="left:53px;top:747.8px;font-size:16px;font-weight:bold;color:#b9c1e2">应用</div>
<svg class="a" style="left:27px;top:143.0px" width="20" height="20" viewBox="0 0 20 20"><path d="M10 1.5l2.6 5.4 5.9.8-4.3 4.1 1 5.8L10 14.8 4.8 17.6l1-5.8L1.5 7.7l5.9-.8z" fill="#b9c1e2"/></svg>
<svg class="a" style="left:27px;top:193.4px" width="20" height="20" viewBox="0 0 20 20"><rect x="2" y="2" width="13" height="16" rx="1.5" fill="#f3c4d8"/><path d="M5 6h6M5 10h6M5 14h6" stroke="#8a7fb0" stroke-width="1.6"/></svg>
<svg class="a" style="left:27px;top:243.8px" width="20" height="20" viewBox="0 0 20 20"><circle cx="10" cy="10" r="8" fill="none" stroke="#b9c1e2" stroke-width="2.4"/><circle cx="10" cy="10" r="3.2" fill="#b9c1e2"/></svg>
<svg class="a" style="left:27px;top:294.2px" width="20" height="20" viewBox="0 0 20 20"><path d="M2 1v17h16" fill="none" stroke="#b9c1e2" stroke-width="2.2"/><rect x="5" y="3" width="11" height="12" fill="none" stroke="#b9c1e2" stroke-width="2"/><path d="M8 5v6M12 5v6M6 11h9" stroke="#b9c1e2" stroke-width="1.6"/></svg>
<svg class="a" style="left:27px;top:344.6px" width="20" height="20" viewBox="0 0 20 20"><path d="M3 2h9l5 5v11H3z" fill="none" stroke="#b9c1e2" stroke-width="1.8"/><path d="M6 14v-4l4-3 4 3v4z" fill="none" stroke="#b9c1e2" stroke-width="1.6"/></svg>
<svg class="a" style="left:27px;top:395.0px" width="20" height="20" viewBox="0 0 20 20"><path d="M2 2h16v6H2z M3 10h14v8H3z" fill="#b9c1e2"/><path d="M5 5h10M6 13h8" stroke="#2e4386" stroke-width="1.6"/></svg>
<svg class="a" style="left:27px;top:445.4px" width="20" height="20" viewBox="0 0 20 20"><rect x="2" y="2" width="16" height="16" rx="2" fill="#b9c1e2"/><path d="M6 15V9M10 15V6M14 15v-4" stroke="#2e4386" stroke-width="1.8"/></svg>
<svg class="a" style="left:27px;top:495.8px" width="20" height="20" viewBox="0 0 20 20"><path d="M2 1v17h16" fill="none" stroke="#b9c1e2" stroke-width="2.2"/><rect x="5" y="3" width="11" height="12" fill="none" stroke="#b9c1e2" stroke-width="2"/><rect x="8" y="6" width="5" height="6" fill="#b9c1e2"/></svg>
<svg class="a" style="left:27px;top:546.2px" width="20" height="20" viewBox="0 0 20 20"><path d="M10 1L1.5 8.5V18h17V8.5z" fill="#b9c1e2"/><circle cx="10" cy="9" r="2.2" fill="#2e4386"/><rect x="5" y="13" width="3.5" height="5" fill="#2e4386"/><rect x="11.5" y="13" width="3.5" height="5" fill="#2e4386"/></svg>
<svg class="a" style="left:27px;top:596.6px" width="20" height="20" viewBox="0 0 20 20"><rect x="1.5" y="2" width="17" height="16" rx="1" fill="#b9c1e2"/><path d="M5 7h10M7 11h6M10 7v9" stroke="#2e4386" stroke-width="1.6"/></svg>
<svg class="a" style="left:27px;top:647.0px" width="20" height="20" viewBox="0 0 20 20"><path d="M2 2h16v16l-8-5-8 5z" fill="#b9c1e2"/><path d="M5 10l3-3 3 2 4-4" fill="none" stroke="#2e4386" stroke-width="1.6"/></svg>
<svg class="a" style="left:27px;top:697.4px" width="20" height="20" viewBox="0 0 20 20"><path d="M10 1l8 4.5v9L10 19l-8-4.5v-9z" fill="#b9c1e2"/><circle cx="10" cy="10" r="3" fill="#2e4386"/></svg>
<svg class="a" style="left:27px;top:747.8px" width="20" height="20" viewBox="0 0 20 20"><rect x="2" y="2" width="16" height="16" rx="3" fill="#b9c1e2"/><path d="M10 5.5v9M5.5 10h9" stroke="#2e4386" stroke-width="2"/></svg>
<svg class="a" style="left:36px;top:200px" width="24" height="32" viewBox="0 0 24 32"><path d="M6 3.5a2 2 0 0 1 4 0V14a2 2 0 0 1 4 0v1a2 2 0 0 1 4 0v1a2 2 0 0 1 4 0v7c0 4-3 7.5-7.5 7.5h-2C9 30.5 7 28 5 25l-3.5-6a2 2 0 0 1 3.2-2.3L6 18.5z" fill="#fff" stroke="#111" stroke-width="1.3"/><path d="M10 14v5M14 15v4M18 16v3" stroke="#111" stroke-width="1"/></svg>
<div class="a" style="left:5px;top:1023px;width:103px;height:35px;background:#253a74"></div>
<div class="t" style="left:41px;top:1030px;font-size:15px;color:#c3c8df">设置</div>
</div>
<div id="flyshadow" class="a"></div>
<div id="fly" class="a">
<div class="t" style="left:19px;top:24.5px;font-size:16px;color:#409eff">商品</div>
<svg class="a" style="left:19px;top:69.1px" width="17" height="17" viewBox="0 0 16 16"><rect x="1.5" y="1.5" width="13" height="13" rx="2" fill="none" stroke="#666" stroke-width="1.2"/><path d="M5 5.5a3 3 0 0 0 6 0" fill="none" stroke="#666" stroke-width="1.2"/></svg><div class="t" style="left:51px;top:68.1px;font-size:16px;color:#555">商品信息</div>
<svg class="a" style="left:19px;top:112.7px" width="17" height="17" viewBox="0 0 16 16"><rect x="1.5" y="1.5" width="13" height="13" rx="2" fill="none" stroke="#666" stroke-width="1.2"/><path d="M5 5.5a3 3 0 0 0 6 0" fill="none" stroke="#666" stroke-width="1.2"/><rect x="10" y="10" width="5" height="5" fill="#fcfcfe"/><path d="M11 11.5h3M11 13.5h3" stroke="#666" stroke-width="1"/></svg><div class="t" style="left:51px;top:111.7px;font-size:16px;color:#555">商品属性</div>
<svg class="a" style="left:19px;top:156.3px" width="17" height="17" viewBox="0 0 16 16"><rect x="1.5" y="1.5" width="13" height="13" rx="2" fill="none" stroke="#666" stroke-width="1.2"/><path d="M5 5.5a3 3 0 0 0 6 0" fill="none" stroke="#666" stroke-width="1.2"/><text x="8" y="13" font-size="4" text-anchor="middle" fill="#666" font-family="Liberation Sans">SKU</text></svg><div class="t" style="left:51px;top:155.3px;font-size:16px;color:#555">SKU条码</div>
<svg class="a" style="left:19px;top:199.9px" width="17" height="17" viewBox="0 0 16 16"><rect x="1.5" y="1.5" width="13" height="13" rx="2" fill="none" stroke="#666" stroke-width="1.2"/><path d="M5 5.5a3 3 0 0 0 6 0" fill="none" stroke="#666" stroke-width="1.2"/><rect x="10" y="10" width="5" height="5" fill="#fcfcfe"/><path d="M11 11.5h3M11 13.5h3" stroke="#666" stroke-width="1"/></svg><div class="t" style="left:51px;top:198.9px;font-size:16px;color:#555">商品详情</div>
<svg class="a" style="left:19px;top:243.5px" width="17" height="17" viewBox="0 0 16 16"><rect x="1.5" y="1.5" width="13" height="13" rx="2" fill="none" stroke="#666" stroke-width="1.2"/><path d="M5 5.5a3 3 0 0 0 6 0" fill="none" stroke="#666" stroke-width="1.2"/></svg><div class="t" style="left:51px;top:242.5px;font-size:16px;color:#555">套餐信息</div>
<div class="t" style="left:19px;top:286.1px;font-size:16px;color:#409eff">商品/套餐价格</div>
<svg class="a" style="left:19px;top:330.7px" width="17" height="17" viewBox="0 0 16 16"><rect x="1.5" y="1.5" width="13" height="13" rx="2" fill="none" stroke="#666" stroke-width="1.2"/><path d="M5 5.5a3 3 0 0 0 6 0" fill="none" stroke="#666" stroke-width="1.2"/><rect x="10" y="10" width="5" height="5" fill="#fcfcfe"/><path d="M11 11.5h3M11 13.5h3" stroke="#666" stroke-width="1"/></svg><div class="t" style="left:51px;top:329.7px;font-size:16px;color:#555">商品/套餐价格本</div>
<div class="t" style="left:19px;top:373.3px;font-size:16px;color:#409eff">宝贝</div>
<svg class="a" style="left:19px;top:417.9px" width="17" height="17" viewBox="0 0 16 16"><rect x="1.5" y="1.5" width="13" height="13" rx="2" fill="none" stroke="#666" stroke-width="1.2"/><path d="M5 5.5a3 3 0 0 0 6 0" fill="none" stroke="#666" stroke-width="1.2"/><rect x="10" y="10" width="5" height="5" fill="#fcfcfe"/><path d="M11 11.5h3M11 13.5h3" stroke="#666" stroke-width="1"/></svg><div class="t" style="left:51px;top:416.9px;font-size:16px;color:#555">宝贝对应</div>
<svg class="a" style="left:19px;top:461.5px" width="17" height="17" viewBox="0 0 16 16"><path d="M3 15V2h10l-2.5 3.5L13 9H3" fill="none" stroke="#666" stroke-width="1.2"/></svg><div class="t" style="left:51px;top:460.5px;font-size:16px;color:#555">宝贝打标</div>
<svg class="a" style="left:19px;top:505.1px" width="17" height="17" viewBox="0 0 16 16"><rect x="1.5" y="1.5" width="13" height="13" rx="2" fill="none" stroke="#666" stroke-width="1.2"/><path d="M6 4.5v7l-1.5-1.5M10 11.5v-7l1.5 1.5" fill="none" stroke="#666" stroke-width="1.1"/></svg><div class="t" style="left:51px;top:504.1px;font-size:16px;color:#555">宝贝上下架</div>
<svg class="a" style="left:19px;top:548.7px" width="17" height="17" viewBox="0 0 16 16"><rect x="1.5" y="1.5" width="13" height="13" rx="2" fill="none" stroke="#666" stroke-width="1.2"/><path d="M6 4.5v7l-1.5-1.5M10 11.5v-7l1.5 1.5" fill="none" stroke="#666" stroke-width="1.1"/></svg><div class="t" style="left:51px;top:547.7px;font-size:16px;color:#555">宝贝发布</div>
<div class="t" style="left:19px;top:591.3px;font-size:16px;color:#409eff">客户/供应商</div>
<svg class="a" style="left:19px;top:635.9px" width="17" height="17" viewBox="0 0 16 16"><path d="M2.5 15V1.5h7l3 3V7M2.5 15h6" fill="none" stroke="#666" stroke-width="1.2"/><path d="M6 6h3M6 9h4M9.5 10.5h4.5V15h-4.5z" fill="none" stroke="#666" stroke-width="1.1"/></svg><div class="t" style="left:51px;top:634.9px;font-size:16px;color:#555">客户/供应商</div>
<svg class="a" style="left:19px;top:679.5px" width="17" height="17" viewBox="0 0 16 16"><circle cx="8" cy="5" r="3.2" fill="none" stroke="#666" stroke-width="1.2"/><path d="M2 15c0-3.5 2.5-5.5 6-5.5s6 2 6 5.5z" fill="none" stroke="#666" stroke-width="1.2"/></svg><div class="t" style="left:51px;top:678.5px;font-size:16px;color:#555">地区管理</div>
<svg class="a" style="left:19px;top:723.1px" width="17" height="17" viewBox="0 0 16 16"><path d="M2.5 15V1.5h7l3 3V7M2.5 15h6" fill="none" stroke="#666" stroke-width="1.2"/><path d="M6 6h3M6 9h4M9.5 10.5h4.5V15h-4.5z" fill="none" stroke="#666" stroke-width="1.1"/></svg><div class="t" style="left:51px;top:722.1px;font-size:16px;color:#555">客户/供应商对应</div>
<div class="t" style="left:19px;top:765.7px;font-size:16px;color:#409eff">店铺</div>
<svg class="a" style="left:19px;top:810.3px" width="17" height="17" viewBox="0 0 16 16"><path d="M2 2h12v4H2zM3 6v9h6M11 9h3.5v5.5H11z" fill="none" stroke="#666" stroke-width="1.2"/></svg><div class="t" style="left:51px;top:809.3px;font-size:16px;color:#555">网店</div>
<svg class="a" style="left:19px;top:853.9px" width="17" height="17" viewBox="0 0 16 16"><path d="M8 1.5l5.5 3.5v4A5.5 5.5 0 0 1 2.5 9V5z" fill="none" stroke="#666" stroke-width="1.2"/><path d="M5.5 8.5h5M8 6v5" stroke="#666" stroke-width="1.1"/></svg><div class="t" style="left:51px;top:852.9px;font-size:16px;color:#555">门店</div>
<div class="t" style="left:19px;top:896.5px;font-size:16px;color:#409eff">直播</div>
<svg class="a" style="left:19px;top:941.1px" width="17" height="17" viewBox="0 0 16 16"><path d="M3 15V2h10l-2.5 3.5L13 9H3" fill="none" stroke="#666" stroke-width="1.2"/></svg><div class="t" style="left:51px;top:940.1px;font-size:16px;color:#555">直播场次管理</div>
<div class="t" style="left:236px;top:24.5px;font-size:16px;color:#409eff">仓库</div>
<svg class="a" style="left:236px;top:69.1px" width="17" height="17" viewBox="0 0 16 16"><path d="M2 7l6-5 6 5v8H2z" fill="none" stroke="#666" stroke-width="1.2"/><path d="M5.5 9.5h5M5.5 12h5" stroke="#666" stroke-width="1.1"/></svg><div class="t" style="left:268px;top:68.1px;font-size:16px;color:#555">存货仓库</div>
<div class="t" style="left:236px;top:111.7px;font-size:16px;color:#409eff">其他</div>
<svg class="a" style="left:236px;top:156.3px" width="17" height="17" viewBox="0 0 16 16"><circle cx="7" cy="5" r="3.2" fill="none" stroke="#666" stroke-width="1.2"/><path d="M1.5 15c0-3.5 2.3-5.5 5.5-5.5" fill="none" stroke="#666" stroke-width="1.2"/><path d="M10 12h4M10 14h4" stroke="#666" stroke-width="1.1"/></svg><div class="t" style="left:268px;top:155.3px;font-size:16px;color:#555">职员管理</div>
<svg class="a" style="left:236px;top:199.9px" width="17" height="17" viewBox="0 0 16 16"><circle cx="7" cy="5" r="3.2" fill="none" stroke="#666" stroke-width="1.2"/><path d="M1.5 15c0-3.5 2.3-5.5 5.5-5.5" fill="none" stroke="#666" stroke-width="1.2"/><circle cx="12" cy="12.5" r="2.5" fill="none" stroke="#666" stroke-width="1.1"/></svg><div class="t" style="left:268px;top:198.9px;font-size:16px;color:#555">角色权限设置</div>
<div class="t" style="left:236px;top:242.5px;font-size:16px;color:#409eff">物流</div>
<svg class="a" style="left:235px;top:286.1px" width="22" height="19" viewBox="0 0 22 19"><rect x="9.5" y="1.5" width="11" height="11" rx="1" fill="none" stroke="#666" stroke-width="1.3"/><path d="M9.5 5.5H5L1.5 9v4.5h8" fill="none" stroke="#666" stroke-width="1.3"/><circle cx="5" cy="15" r="2.2" fill="#fcfcfe" stroke="#666" stroke-width="1.3"/><circle cx="15" cy="15" r="2.2" fill="#fcfcfe" stroke="#666" stroke-width="1.3"/></svg><div class="t" style="left:268px;top:286.1px;font-size:16px;color:#555">物流公司</div>
<svg class="a" style="left:235px;top:329.7px" width="22" height="19" viewBox="0 0 22 19"><rect x="9.5" y="1.5" width="11" height="11" rx="1" fill="none" stroke="#666" stroke-width="1.3"/><path d="M9.5 5.5H5L1.5 9v4.5h8" fill="none" stroke="#666" stroke-width="1.3"/><circle cx="5" cy="15" r="2.2" fill="#fcfcfe" stroke="#666" stroke-width="1.3"/><circle cx="15" cy="15" r="2.2" fill="#fcfcfe" stroke="#666" stroke-width="1.3"/></svg><div class="t" style="left:268px;top:329.7px;font-size:16px;color:#555">物流服务模版管理</div>
<svg class="a" style="left:236px;top:374.3px" width="17" height="17" viewBox="0 0 16 16"><circle cx="8" cy="5" r="3.2" fill="none" stroke="#666" stroke-width="1.2"/><path d="M2 15c0-3.5 2.5-5.5 6-5.5s6 2 6 5.5z" fill="none" stroke="#666" stroke-width="1.2"/></svg><div class="t" style="left:268px;top:373.3px;font-size:16px;color:#555">物流不达区域</div>
<div class="t" style="left:236px;top:416.9px;font-size:16px;color:#409eff">科目</div>
<svg class="a" style="left:236px;top:461.5px" width="17" height="17" viewBox="0 0 16 16"><path d="M2.5 15V1.5h9V7M2.5 15h6" fill="none" stroke="#666" stroke-width="1.2"/><path d="M5 5l2 2.5 2-2.5M7 7.5v4M5.5 9h3" fill="none" stroke="#666" stroke-width="1"/><path d="M11 10v5M9.5 13.5l1.5 1.5 1.5-1.5" fill="none" stroke="#666" stroke-width="1"/></svg><div class="t" style="left:268px;top:460.5px;font-size:16px;color:#555">费用科目</div>
<svg class="a" style="left:236px;top:505.1px" width="17" height="17" viewBox="0 0 16 16"><path d="M2.5 15V1.5h9V7M2.5 15h6" fill="none" stroke="#666" stroke-width="1.2"/><path d="M5 5l2 2.5 2-2.5M7 7.5v4M5.5 9h3" fill="none" stroke="#666" stroke-width="1"/><path d="M11 10v5M9.5 13.5l1.5 1.5 1.5-1.5" fill="none" stroke="#666" stroke-width="1"/></svg><div class="t" style="left:268px;top:504.1px;font-size:16px;color:#555">收入科目</div>
<svg class="a" style="left:236px;top:548.7px" width="17" height="17" viewBox="0 0 16 16"><rect x="1.5" y="3" width="13.5" height="11" rx="1.5" fill="none" stroke="#666" stroke-width="1.2"/><path d="M3 3l8-1.5V3M15 7h-4a1.5 1.5 0 0 0 0 4h4" fill="none" stroke="#666" stroke-width="1.2"/></svg><div class="t" style="left:268px;top:547.7px;font-size:16px;color:#555">现金银行</div>
<svg class="a" style="left:236px;top:592.3px" width="17" height="17" viewBox="0 0 16 16"><rect x="1.5" y="3" width="13.5" height="11" rx="1.5" fill="none" stroke="#666" stroke-width="1.2"/><path d="M3 3l8-1.5V3M15 7h-4a1.5 1.5 0 0 0 0 4h4" fill="none" stroke="#666" stroke-width="1.2"/></svg><div class="t" style="left:268px;top:591.3px;font-size:16px;color:#555">会计科目</div>
<div class="t" style="left:236px;top:634.9px;font-size:16px;color:#409eff">配置</div>
<svg class="a" style="left:236px;top:679.5px" width="17" height="17" viewBox="0 0 16 16"><path d="M3 15V4l3-2.5h7V9" fill="none" stroke="#666" stroke-width="1.2"/><circle cx="11.5" cy="12" r="2.6" fill="none" stroke="#666" stroke-width="1.2"/><path d="M6 6h4M6 9h3" stroke="#666" stroke-width="1.1"/></svg><div class="t" style="left:268px;top:678.5px;font-size:16px;color:#555">基础资料配置</div>
<svg class="a" style="left:236px;top:723.1px" width="17" height="17" viewBox="0 0 16 16"><rect x="2" y="1.5" width="11" height="13" fill="none" stroke="#666" stroke-width="1.2"/><path d="M4.5 4.5h6M4.5 7.5h6M4.5 10.5h3" stroke="#666" stroke-width="1.1"/><circle cx="12" cy="12.5" r="2.2" fill="#fcfcfe" stroke="#666" stroke-width="1.1"/></svg><div class="t" style="left:268px;top:722.1px;font-size:16px;color:#555">单据字段配置</div>
<svg class="a" style="left:236px;top:766.7px" width="17" height="17" viewBox="0 0 16 16"><rect x="2" y="1.5" width="11" height="13" fill="none" stroke="#666" stroke-width="1.2"/><path d="M4.5 4.5h6M4.5 7.5h6M4.5 10.5h3" stroke="#666" stroke-width="1.1"/><circle cx="12" cy="12.5" r="2.2" fill="#fcfcfe" stroke="#666" stroke-width="1.1"/></svg><div class="t" style="left:268px;top:765.7px;font-size:16px;color:#555">单据编号配置</div>
</div>
<div id="flyedge" class="a"></div>
<div class="a" style="left:2189px;top:43px;width:5px;height:1015px;background:#e6e7ec"></div><div class="a" style="left:2190px;top:43px;width:4px;height:690px;background:#c9cad2"></div>
<div id="status" class="a"></div>
<svg class="a" style="left:8px;top:1062px" width="20" height="16" viewBox="0 0 20 16"><path d="M2 1v14" stroke="#777" stroke-width="1.4"/><path d="M7 2l10 6-10 6z" fill="none" stroke="#777" stroke-width="1.4"/></svg>
<div class="a" style="left:33px;top:1061px;width:1px;height:17px;background:#ddd"></div>
<div class="t" style="left:40px;top:1061.5px;line-height:17px;font-size:13px;color:#555">完成</div>
<svg class="a" style="left:1966px;top:1061px" width="18" height="18" viewBox="0 0 18 18"><path d="M9 1l7 3v5c0 4-3 7-7 8-4-1-7-4-7-8V4z" fill="none" stroke="#777" stroke-width="1.3"/><path d="M5.5 9l2.5 2.5 4.5-4.5" fill="none" stroke="#777" stroke-width="1.3"/></svg>
<svg class="a" style="left:2005px;top:1061px" width="20" height="18" viewBox="0 0 20 18"><path d="M2 6h4l5-4v14l-5-4H2z" fill="none" stroke="#777" stroke-width="1.3"/><path d="M14 5c2 2 2 6 0 8M16 3c3 3 3 9 0 12" fill="none" stroke="#777" stroke-width="1.3"/></svg>
<svg class="a" style="left:2045px;top:1061px" width="18" height="18" viewBox="0 0 18 18"><rect x="2" y="5" width="14" height="11" fill="none" stroke="#777" stroke-width="1.3"/><path d="M6 5V2h6v3M9 8v6M6 11h6" fill="none" stroke="#777" stroke-width="1.3"/></svg>
<svg class="a" style="left:2085px;top:1061px" width="18" height="18" viewBox="0 0 18 18"><path d="M9 1l7 3v5c0 4-3 7-7 8-4-1-7-4-7-8V4z" fill="none" stroke="#777" stroke-width="1.3"/><text x="9" y="11.5" font-size="6" text-anchor="middle" fill="#777" font-family="Liberation Sans">AB</text></svg>
<svg class="a" style="left:2132px;top:1061px" width="20" height="19" viewBox="0 0 20 19"><circle cx="8" cy="8" r="6.3" fill="none" stroke="#777" stroke-width="1.3"/><path d="M12.5 12.5l5 5M5 8h6M8 5v6" stroke="#777" stroke-width="1.3"/></svg>
<div class="t" style="left:2105px;top:1061.5px;line-height:17px;font-size:13px;color:#888">0</div>
<div class="t" style="left:2154px;top:1061.5px;line-height:17px;font-size:13px;color:#888">100%</div>

</body></html>
